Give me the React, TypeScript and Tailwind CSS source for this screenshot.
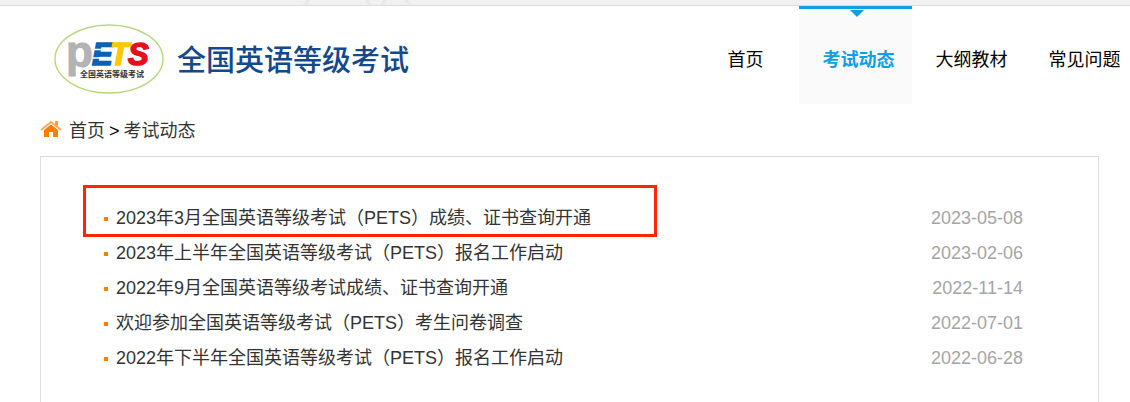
const navItems = [
  { label: '首页' },
  { label: '考试动态', active: true },
  { label: '大纲教材' },
  { label: '常见问题' },
];

const news = [
  { title: '2023年3月全国英语等级考试（PETS）成绩、证书查询开通', date: '2023-05-08', marked: true },
  { title: '2023年上半年全国英语等级考试（PETS）报名工作启动', date: '2023-02-06' },
  { title: '2022年9月全国英语等级考试成绩、证书查询开通', date: '2022-11-14' },
  { title: '欢迎参加全国英语等级考试（PETS）考生问卷调查', date: '2022-07-01' },
  { title: '2022年下半年全国英语等级考试（PETS）报名工作启动', date: '2022-06-28' },
];

function Logo() {
  return (
    <svg width="110" height="70" viewBox="0 0 110 70" className="shrink-0" role="img" aria-label="PETS">
      <ellipse cx="55" cy="35" rx="54" ry="34" fill="#fff" stroke="#b5d97c" strokeWidth="1.4" />
      <g fontFamily="Liberation Sans, sans-serif" fontWeight="bold">
        <text x="12" y="43" fontSize="44" fill="#b1b3b4" stroke="#b1b3b4" strokeWidth="1">p</text>
        <g fontSize="31" fontStyle="italic" strokeWidth="1.6">
          <text x="38" y="41" fill="#0b62b4" stroke="#0b62b4">E</text>
          <text x="56" y="41" fill="#fdc800" stroke="#fdc800">T</text>
          <text x="74" y="41" fill="#e60f1e" stroke="#e60f1e">S</text>
        </g>
      </g>
      <path d="M39 25.5h19M39 34h18" stroke="#fff" strokeWidth="1.6" />
      <text x="26" y="53" fontSize="8" fontWeight="700" fill="#333" fontFamily="Noto Sans CJK SC, sans-serif">
        全国英语等级考试
      </text>
    </svg>
  );
}

function TopBar() {
  return (
    <div className="h-[6px] shrink-0 border-b border-[#dcdcdc] bg-[#f1f1f1]">
      <svg width="430" height="5" className="block" fill="none" stroke="#e6e8ee" strokeWidth="3" aria-hidden="true">
        <path d="M309 -1l-5 7M366 -1l5 7M386 -1l-5 7M405 -1l6 7" />
      </svg>
    </div>
  );
}

function Header() {
  return (
    <header className="flex h-[98px] shrink-0 items-start justify-between pl-[54px]">
      <a href="#" className="flex items-center gap-[13px] pt-[18px]">
        <Logo />
        <span className="pt-[3px] text-[29px] leading-[36px] font-medium whitespace-nowrap text-[#14498c]">
          全国英语等级考试
        </span>
      </a>
      <nav className="-mr-2 flex h-full shrink-0">
        {navItems.map((item) => (
          <a
            key={item.label}
            href="#"
            className={`relative flex w-[113px] items-center justify-center border-t-[3px] pt-2 pl-[6px] text-[18px] leading-[27px] ${
              item.active
                ? 'border-[#0f9fe5] bg-[#fafafa] font-bold text-[#0f9fe5]'
                : 'border-transparent text-black'
            }`}
          >
            {item.active && (
              <span className="absolute top-px left-[51px] border-x-[7px] border-t-[7px] border-x-transparent border-t-[#0f9fe5]" />
            )}
            {item.label}
          </a>
        ))}
      </nav>
    </header>
  );
}

function Breadcrumb() {
  return (
    <div className="flex shrink-0 items-center pt-[14px] pb-[11px] text-[18px] leading-[27px] text-[#333]">
      <svg width="22" height="18" viewBox="0 0 22 18" className="mr-[7px] mb-[5px]" aria-hidden="true">
        <path d="M15 1h3v5h-3z" fill="#ff9a3d" />
        <path d="M4 10L11 4.5l7 5.5v7h-5v-5H9v5H4z" fill="#ff7e00" />
        <path d="M1 10L11 2l10 8" fill="none" stroke="#ffa95c" strokeWidth="2" />
        <path d="M4 10.5L11 5l7 5.5z" fill="#ff7e00" />
      </svg>
      <a href="#">首页</a>
      <span className="mx-1 text-black">&gt;</span>
      <a href="#">考试动态</a>
    </div>
  );
}

export default function App() {
  return (
    <div className="flex min-h-screen flex-col overflow-hidden bg-white font-['Liberation_Sans','Noto_Sans_CJK_SC',sans-serif]">
      <TopBar />
      <Header />
      <main className="mr-[31px] ml-[40px] flex grow flex-col">
        <Breadcrumb />
        <ul className="grow border border-b-0 border-[#dcdcdc] pt-[44px] pr-[75px] pl-[63px]">
          {news.map((item) => (
            <li key={item.date} className="relative flex h-[35px] items-center justify-between text-[18px] leading-[27px]">
              {item.marked && (
                <span className="pointer-events-none absolute -top-4 -left-[21px] h-[52px] w-[574px] border-[3px] border-[#ff2600]" />
              )}
              <a href="#" className="flex items-center text-[#333]">
                <span className="mr-2 size-1 bg-[#ff7e00]" />
                {item.title}
              </a>
              <time className="text-[#a5a5a5]">{item.date}</time>
            </li>
          ))}
        </ul>
      </main>
    </div>
  );
}
